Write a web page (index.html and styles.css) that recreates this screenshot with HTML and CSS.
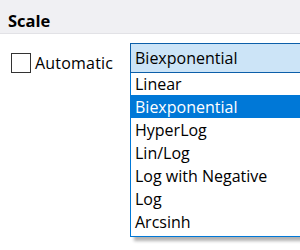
FILE: index.html
```html
<!DOCTYPE html>
<html>
<head>
<meta charset="utf-8">
<link rel="stylesheet" href="styles.css">
</head>
<body>
<div class="panel">
  <div class="header"><span class="title">Scale</span></div>
  <div class="row">
    <label class="check"><span class="box"></span><span class="check-label">Automatic</span></label>
    <div class="combo">
      <div class="select">Biexponential</div>
      <ul class="dropdown">
        <li class="item">Linear</li>
        <li class="item selected">Biexponential</li>
        <li class="item">HyperLog</li>
        <li class="item">Lin/Log</li>
        <li class="item">Log with Negative</li>
        <li class="item">Log</li>
        <li class="item">Arcsinh</li>
      </ul>
    </div>
  </div>
</div>
</body>
</html>
```

FILE: styles.css
```css
html, body {
  margin: 0;
  padding: 0;
  background: #ffffff;
  overflow: hidden;
}
body {
  width: 300px;
  height: 250px;
  font-family: "Open Sans", "Noto Sans", sans-serif;
  color: #000;
}
.panel {
  width: 300px;
  height: 250px;
  position: relative;
  overflow: hidden;
}
.header {
  height: 34px;
  background: #f0f0f3;
  border-bottom: 1px solid #e2e2e6;
  box-sizing: border-box;
  display: flex;
  align-items: flex-start;
  padding-left: 8px;
  padding-top: 11px;
}
.title {
  font-weight: 700;
  font-size: 16.5px;
  line-height: 20px;
}
.row {
  display: flex;
  align-items: flex-start;
  padding-top: 9px;
}
.check {
  flex: none;
  display: flex;
  align-items: center;
  box-sizing: border-box;
  padding-left: 11px;
  margin-top: 10px;
  width: 130px;
}
.box {
  flex: none;
  width: 20px;
  height: 20px;
  box-sizing: border-box;
  border: 1.5px solid #333;
  background: #fff;
  margin-right: 4px;
}
.check-label {
  font-size: 16px;
  line-height: 20px;
  letter-spacing: 0.2px;
}
.combo {
  flex: none;
  position: relative;
  width: 200px;
}
.select {
  position: relative;
  z-index: 1;
  height: 30px;
  box-sizing: border-box;
  border: 1px solid #0c5fa9;
  background: #cce4f7;
  font-size: 16px;
  line-height: 29px;
  padding-left: 4px;
}
.dropdown {
  position: absolute;
  top: 29px;
  left: 0;
  width: 200px;
  margin: 0;
  padding: 0 0 3px 0;
  list-style: none;
  background: #fff;
  border-left: 1px solid #0078d7;
  border-bottom: 1px solid #0078d7;
  box-sizing: border-box;
  box-shadow: 4px 4px 3px rgba(0, 0, 0, 0.3);
}
.item {
  height: 23px;
  box-sizing: border-box;
  padding-top: 1px;
  line-height: 22px;
  font-size: 16px;
  padding-left: 4px;
}
.item.selected {
  background: #0078d7;
  color: #fff;
}
```
